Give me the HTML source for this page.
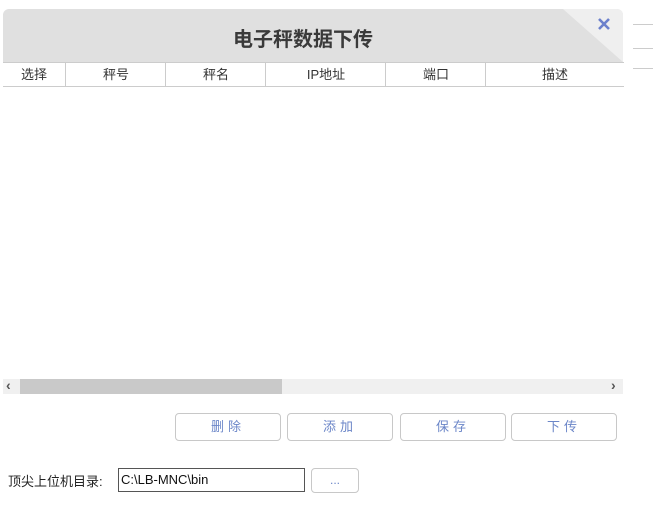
<!DOCTYPE html>
<html><head><meta charset="utf-8"><style>
body{margin:0;width:653px;height:524px;background:#fff;position:relative;overflow:hidden;font-family:"Liberation Sans","Noto Sans CJK SC",sans-serif}
.a{position:absolute}
.hd{left:3px;top:9px;width:620px;height:53px;background:#e0e0e0;border-radius:6px 6px 0 0;overflow:hidden}
.tt{left:0;width:600px;top:14px;text-align:center;font-size:20px;font-weight:bold;color:#3a3a3a}
.th{top:62px;height:23px;border-top:1px solid #ccc;border-bottom:1px solid #ccc;font-size:13px;color:#333;text-align:center;line-height:23px;border-left:1px solid #ccc;box-sizing:content-box}
.btn{top:413px;height:28px;border:1px solid #c8c8c8;border-radius:4px;color:#6b86c8;font-size:13px;text-align:center;line-height:26px;letter-spacing:4px;box-sizing:border-box}
.ln{left:633px;width:20px;height:1px;background:#ccc}
</style></head><body>
<div class="a hd">
<svg class="a" style="left:560px;top:0" width="60" height="53"><polygon points="0,0 60,0 60,53" fill="#efefef"/></svg>
<div class="a tt">电子秤数据下传</div>
<svg class="a" style="left:594px;top:8px" width="14" height="14"><path d="M2 2L12 12M12 2L2 12" stroke="#6b80cc" stroke-width="2.6"/></svg>
</div>
<div class="a ln" style="top:24px"></div><div class="a ln" style="top:48px"></div><div class="a ln" style="top:68px"></div>
<div class="a th" style="left:3px;width:62px;border-left:none">选择</div>
<div class="a th" style="left:65px;width:100px">秤号</div>
<div class="a th" style="left:165px;width:100px">秤名</div>
<div class="a th" style="left:265px;width:120px">IP地址</div>
<div class="a th" style="left:385px;width:100px">端口</div>
<div class="a th" style="left:485px;width:138px">描述</div>
<div class="a" style="left:3px;top:379px;width:620px;height:15px;background:#f0f0f0"></div>
<div class="a" style="left:20px;top:379px;width:262px;height:15px;background:#c9c9c9"></div>
<div class="a" style="left:6px;top:378px;font-size:14px;line-height:15px;color:#555;font-weight:bold">‹</div>
<div class="a" style="left:611px;top:378px;font-size:14px;line-height:15px;color:#555;font-weight:bold">›</div>
<div class="a btn" style="left:175px;width:106px">删除</div>
<div class="a btn" style="left:287px;width:106px">添加</div>
<div class="a btn" style="left:400px;width:106px">保存</div>
<div class="a btn" style="left:511px;width:106px">下传</div>
<div class="a" style="left:8px;top:471px;font-size:13px;color:#222">顶尖上位机目录:</div>
<div class="a" style="left:118px;top:468px;width:187px;height:24px;border:1px solid #555;box-sizing:border-box;font-size:13px;line-height:22px;padding-left:2px;color:#111">C:\LB-MNC\bin</div>
<div class="a btn" style="left:311px;top:468px;width:48px;height:25px;line-height:23px;letter-spacing:0;font-size:12px">...</div>
</body></html>
